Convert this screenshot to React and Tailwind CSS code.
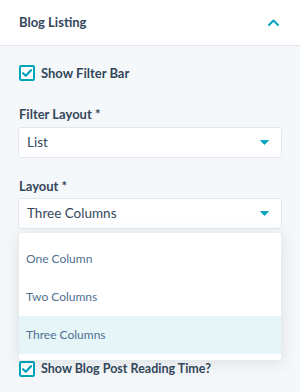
import React from 'react';

const font = { fontFamily: 'Lato, "Noto Sans", sans-serif' };

function Check() {
  return (
    <span className="flex h-[16px] w-[16px] shrink-0 items-center justify-center rounded-[2px] border-2 border-[#00a4bd] bg-white">
      <svg width="10" height="8" viewBox="0 0 10 8">
        <path d="M1 4.2 L3.8 6.8 L9 1.2" fill="none" stroke="#00a4bd" strokeWidth="2.2" strokeLinecap="round" strokeLinejoin="round" />
      </svg>
    </span>
  );
}

function Caret() {
  return (
    <svg width="9" height="5" viewBox="0 0 9 5" className="shrink-0">
      <path d="M0.5 0.5 L8.5 0.5 L4.5 4.5 Z" fill="#00a4bd" stroke="#00a4bd" strokeWidth="0.8" strokeLinejoin="round" />
    </svg>
  );
}

function Select({ value }) {
  return (
    <div className="flex h-[31px] items-center justify-between rounded-[3px] border border-[#e3e8ee] bg-white pl-[8px] pr-[12px]">
      <span className="text-[13.5px] text-[#33475b]">{value}</span>
      <Caret />
    </div>
  );
}

export default function App() {
  const options = ['One Column', 'Two Columns', 'Three Columns'];

  return (
    <div className="h-[392px] w-[300px] overflow-hidden bg-[#f5f8fa]" style={font}>
      <div className="flex h-[46px] items-center justify-between border-b border-[#e3e8ee] bg-white pl-[19px] pr-[21px]">
        <span className="text-[13px] font-bold text-[#33475b]">Blog Listing</span>
        <svg width="11" height="7" viewBox="0 0 11 7">
          <path d="M1 6 L5.5 1.5 L10 6" fill="none" stroke="#00a4bd" strokeWidth="2" strokeLinecap="round" strokeLinejoin="round" />
        </svg>
      </div>

      <div className="px-[18px]">
        <label className="mt-[19px] ml-[1px] flex items-center gap-[6px]">
          <Check />
          <span className="text-[13px] font-bold leading-[16px] text-[#33475b]">Show Filter Bar</span>
        </label>

        <div className="mt-[25px] ml-[1px] text-[13px] font-bold leading-[16px] text-[#33475b]">Filter Layout *</div>
        <div className="mt-[5px]">
          <Select value="List" />
        </div>

        <div className="mt-[20px] ml-[1px] text-[13px] font-bold leading-[16px] text-[#33475b]">Layout *</div>
        <div className="relative mt-[4px]">
          <Select value="Three Columns" />
          <div className="absolute left-[1px] right-[1px] top-[35px] z-10 h-[127px] rounded-[3px] bg-white pt-[7px] shadow-[0_2px_16px_rgba(45,62,80,0.14)]">
            {options.map((o) => (
              <div
                key={o}
                className={`flex h-[38px] items-center pl-[7px] text-[12px] text-[#516f90] ${o === 'Three Columns' ? 'bg-[#e5f5f8]' : ''}`}
              >
                {o}
              </div>
            ))}
          </div>
        </div>

        <label className="mt-[132px] ml-[1px] flex items-center gap-[6px]">
          <Check />
          <span className="text-[12.5px] font-bold leading-[16px] text-[#33475b]">Show Blog Post Reading Time?</span>
        </label>
      </div>
    </div>
  );
}
